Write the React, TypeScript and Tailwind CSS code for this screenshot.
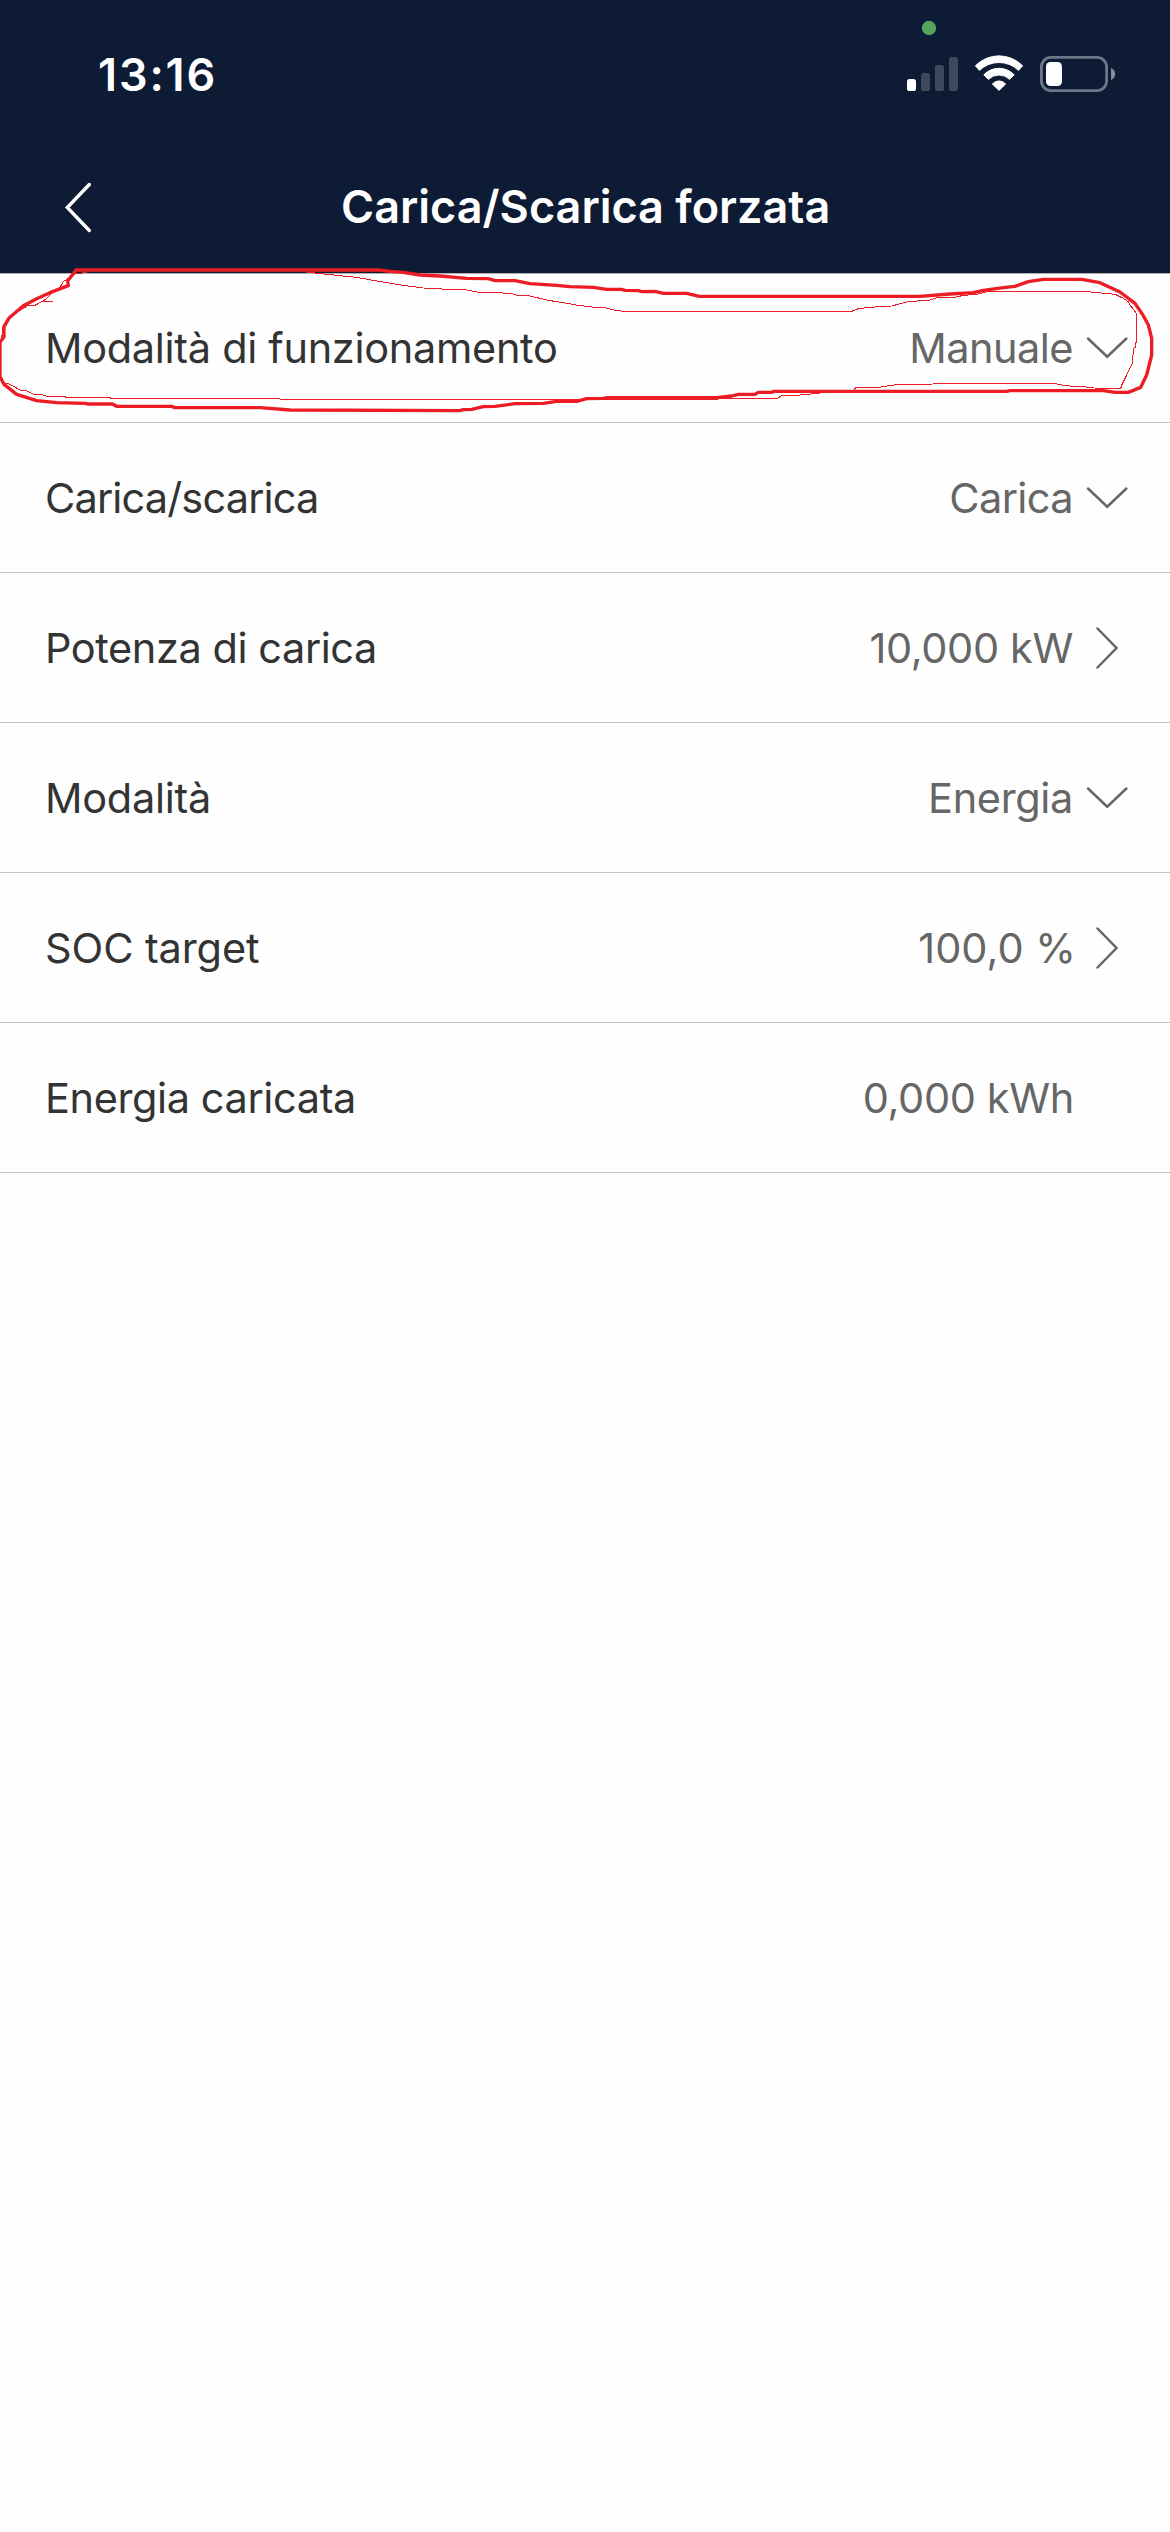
import React from 'react';

type RowIcon = 'down' | 'right' | 'none';

interface Row {
  label: string;
  labelClass: string;
  value: string;
  valueClass: string;
  icon: RowIcon;
}

const rows: Row[] = [
  { label: 'Modalità di funzionamento', labelClass: 'tracking-[-0.31px]', value: 'Manuale', valueClass: 'tracking-[-0.53px]', icon: 'down' },
  { label: 'Carica/scarica', labelClass: 'tracking-[-0.85px]', value: 'Carica', valueClass: 'tracking-[-0.61px]', icon: 'down' },
  { label: 'Potenza di carica', labelClass: 'tracking-[-0.43px]', value: '10,000 kW', valueClass: 'tracking-[-0.36px]', icon: 'right' },
  { label: 'Modalità', labelClass: 'tracking-[-0.28px]', value: 'Energia', valueClass: 'tracking-[-0.35px]', icon: 'down' },
  { label: 'SOC target', labelClass: 'tracking-[-0.11px]', value: '100,0 %', valueClass: '-mr-[3px]', icon: 'right' },
  { label: 'Energia caricata', labelClass: 'tracking-[-0.4px]', value: '0,000 kWh', valueClass: '-mr-px tracking-[-0.36px]', icon: 'none' },
];

function Chevron({ icon }: { icon: RowIcon }) {
  return (
    <span className="block h-[149px] w-[97px] shrink-0">
      {icon !== 'none' && (
        <svg className="block h-full w-full" viewBox="0 0 97 149" fill="none" stroke="#666666" strokeWidth="2.5" strokeLinecap="round">
          <path d={icon === 'down' ? 'M15 65.5L34.2 83.7L53.4 65.5' : 'M24.5 55.5L43.5 75L24.5 94.5'} />
        </svg>
      )}
    </span>
  );
}

function StatusIcons() {
  return (
    <svg className="block h-[120px] w-[290px]" viewBox="880 0 290 120">
      <circle cx="929" cy="28" r="7.2" fill="#55a55c" />
      <rect x="907" y="79" width="9" height="12" rx="2.6" fill="#fff" />
      <g fill="#3e495d">
        <rect x="921" y="73" width="9" height="18" rx="2.6" />
        <rect x="935" y="65" width="9" height="26" rx="2.6" />
        <rect x="949" y="57" width="9" height="34" rx="2.6" />
      </g>
      <g fill="#fff" stroke="#fff" strokeWidth="1" strokeLinejoin="round">
        <path d="M975.4 65.8A33 33 0 0 1 1022.6 65.8L1018.5 70.4A28 28 0 0 0 979.5 70.4Z" />
        <path d="M983.8 74.8A21 21 0 0 1 1014.2 74.8L1009.6 79.4A15 15 0 0 0 988.4 79.4Z" />
        <path d="M992.4 84A8.6 8.6 0 0 1 1005.6 84L999 90.4Z" />
      </g>
      <rect x="1041.4" y="57.4" width="65.2" height="33.2" rx="9.5" fill="none" stroke="#6e768a" strokeWidth="2.8" />
      <rect x="1046" y="62" width="16" height="24" rx="4.5" fill="#fff" />
      <path d="M1111 68C1113.6 69 1115.2 71.3 1115.2 74S1113.6 79 1111 80Z" fill="#868d9c" />
    </svg>
  );
}

/* Freehand red marker drawn around the first row. */
function MarkerLoop() {
  return (
    <svg className="pointer-events-none absolute -top-[18px] left-0 h-[175px] w-[1170px]" viewBox="0 0 3510 525" fill="none" stroke="#ed1c24" strokeLinejoin="round" strokeLinecap="round">
      <path
        strokeWidth="10"
        d="M228 45L1135 45L1170 49L1210 52L1260 60L1320 63L1400 70L1465 71L1485 77L1545 77L1590 86L1670 91L1710 95L1780 97L1820 103L1865 103L1875 106L1915 107L1925 110L1965 109L1990 115L2060 115L2098 124L2760 124L2850 117L2920 113L2950 106L3010 98L3045 94L3085 80L3130 73L3245 73L3300 83L3360 111L3405 145L3430 182L3445 210L3455 250L3455 300L3440 360L3422 397L3385 412L3345 412L3310 407L3030 407L3020 409L2320 409L2315 412L2275 412L2265 418L2215 418L2195 423L2170 426L2150 428L1820 428L1810 430L1760 431L1730 439L1670 439L1630 445L1545 446L1485 454L1450 455L1415 463L1390 464L1380 467L870 465L780 458L525 458L515 454L350 454L337 447L265 447L255 445L170 443L110 437L50 418L12 388L0 365L0 262L12 245L12 215L28 188L70 152L110 131L150 113L205 92L203 78L228 45"
      />
      <g strokeWidth="3" strokeLinecap="butt" shapeRendering="crispEdges">
        <path d="M262 52L225 57L190 80L180 97L155 115L133 136L105 151L85 151L60 166L30 185L10 210L5 250M125 139L158 139" />
        <path d="M12 383L28 387L60 405L80 408L98 417L130 420L140 424L195 425L200 428L330 428L332 430L838 430L840 433L2153 433L2155 430L2333 430L2345 422L2390 421L2420 418L2460 415L2462 409" />
        <path d="M2562 405L2568 397L2638 397L2660 393L2698 388L2800 387L2802 385L3160 385L3192 391L3220 394L3240 394L3282 399L3362 401L3365 391L3385 350L3398 323L3400 280L3407 277L3409 250L3409 175L3390 150L3385 140L3370 130L3345 118L3315 115L3275 112L3270 109L2965 109L2930 118L2890 121L2865 127L2810 128L2790 135L2725 140L2675 153L2610 157L2575 161L2555 169L1870 169L1845 166L1815 158L1775 156L1735 151L1700 145L1645 136L1590 123L1550 121L1540 117L1500 113L1435 112L1395 104L1325 102L1270 99L1210 91L1135 79L1070 67L1010 61L945 54L918 51" />
      </g>
    </svg>
  );
}

export default function App() {
  return (
    <div className="min-h-[2532px] w-[1170px] overflow-hidden bg-[#fefefe] font-['Inter',sans-serif]">
      <header className="h-[273px] bg-[#0d1b35] text-white">
        <div className="flex h-[120px] items-start justify-between pl-[98px]">
          <span className="pt-[45px] text-[45px] leading-[60px] font-semibold tracking-[1.87px]">13:16</span>
          <StatusIcons />
        </div>
        <div className="flex pt-[57px]">
          <svg className="block h-[60px] w-[341px] shrink-0" viewBox="0 0 341 60" fill="none" stroke="#fff" strokeWidth="3.4" strokeLinecap="round">
            <path d="M89.3 7.5L67.3 30.5L89.3 53.5" />
          </svg>
          <h1 className="text-[45px] leading-[60px] font-semibold whitespace-nowrap">Carica/Scarica forzata</h1>
        </div>
      </header>

      <main className="relative">
        <ul className="shadow-[inset_0_1px_0_#b0b0b0]">
          {rows.map((row) => (
            <li key={row.label} className="flex h-[150px] items-center border-b border-[#c4c4c4] pl-[45px] text-[41.5px] leading-[60px] whitespace-nowrap">
              <span className={`text-[#333333] ${row.labelClass}`}>{row.label}</span>
              <span className={`ml-auto text-[#666666] ${row.valueClass}`}>{row.value}</span>
              <Chevron icon={row.icon} />
            </li>
          ))}
        </ul>
        <MarkerLoop />
      </main>
    </div>
  );
}
